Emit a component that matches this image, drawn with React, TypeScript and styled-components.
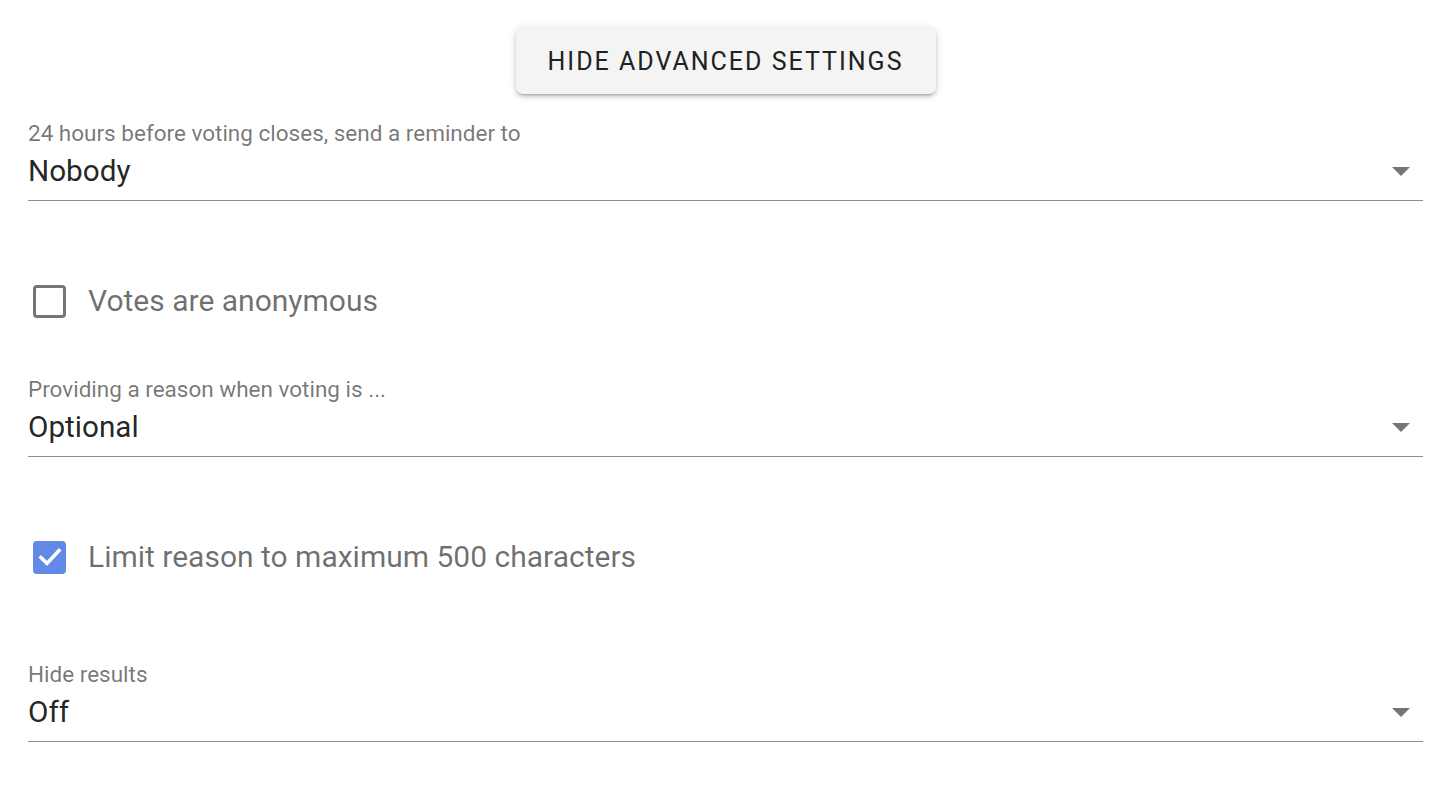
import React from "react";
import styled, { createGlobalStyle } from "styled-components";

const GlobalStyle = createGlobalStyle`
  html, body {
    margin: 0;
    padding: 0;
    background: #ffffff;
    font-family: Roboto, "Noto Sans", "Liberation Sans", sans-serif;
  }
`;

const Page = styled.div`
  display: flex;
  flex-direction: column;
  padding: 27px 20px 0 28px;
`;

const ButtonRow = styled.div`
  display: flex;
  justify-content: center;
`;

const ToggleButton = styled.button`
  height: 67px;
  width: 420px;
  border: none;
  border-radius: 7px;
  background: #f4f4f4;
  color: #212121;
  font-family: Roboto, sans-serif;
  font-size: 25px;
  font-weight: 400;
  letter-spacing: 2px;
  text-transform: uppercase;
  cursor: pointer;
  padding: 2px 0 0;
  box-shadow: 0 3px 2px -2px rgba(0, 0, 0, 0.2), 0 3px 4px 0 rgba(0, 0, 0, 0.14),
    0 1px 9px 0 rgba(0, 0, 0, 0.12);
`;

const Field = styled.div<{ $gap: number }>`
  display: flex;
  flex-direction: column;
  margin-top: ${(p) => p.$gap}px;
`;

const Label = styled.div`
  font-size: 22.5px;
  line-height: 26px;
  color: rgba(0, 0, 0, 0.54);
`;

const SelectBox = styled.div`
  display: flex;
  align-items: center;
  justify-content: space-between;
  margin-top: 7px;
  padding-bottom: 11px;
  border-bottom: 1px solid #8f8f8f;
  cursor: pointer;
`;

const Value = styled.div`
  font-size: 29.7px;
  line-height: 36px;
  color: rgba(0, 0, 0, 0.87);
`;

const Arrow = styled.svg`
  width: 18px;
  height: 9px;
  margin-right: 13px;
  fill: #757575;
`;

const CheckRow = styled.label<{ $gap: number }>`
  display: flex;
  align-items: center;
  height: 50px;
  margin-top: ${(p) => p.$gap}px;
  gap: 22px;
  padding-left: 5px;
  cursor: pointer;
`;

const Box = styled.span<{ $checked: boolean }>`
  box-sizing: border-box;
  width: 33px;
  height: 33px;
  border-radius: 4px;
  display: flex;
  align-items: center;
  justify-content: center;
  border: ${(p) => (p.$checked ? "none" : "3.5px solid #757575")};
  background: ${(p) => (p.$checked ? "#6389e6" : "transparent")};
`;

const CheckText = styled.span`
  font-size: 30px;
  line-height: 36px;
  color: rgba(0, 0, 0, 0.56);
`;

function Select({ label, value, gap }: { label: string; value: string; gap: number }) {
  return (
    <Field $gap={gap}>
      <Label>{label}</Label>
      <SelectBox>
        <Value>{value}</Value>
        <Arrow viewBox="0 0 18 9">
          <path d="M0 0 L18 0 L9 9 Z" />
        </Arrow>
      </SelectBox>
    </Field>
  );
}

function Check({ label, checked, gap }: { label: string; checked: boolean; gap: number }) {
  return (
    <CheckRow $gap={gap}>
      <Box $checked={checked}>
        {checked && (
          <svg width="24" height="20" viewBox="0 0 24 20">
            <path
              d="M3 10.5 L9 16.5 L21 3.5"
              fill="none"
              stroke="#ffffff"
              strokeWidth="3.6"
              strokeLinecap="square"
            />
          </svg>
        )}
      </Box>
      <CheckText>{label}</CheckText>
    </CheckRow>
  );
}

export default function App() {
  return (
    <>
      <GlobalStyle />
      <Page>
        <ButtonRow>
          <ToggleButton>Hide advanced settings</ToggleButton>
        </ButtonRow>
        <Select gap={26} label="24 hours before voting closes, send a reminder to" value="Nobody" />
        <Check gap={75} label="Votes are anonymous" checked={false} />
        <Select gap={50} label="Providing a reason when voting is ..." value="Optional" />
        <Check gap={75} label="Limit reason to maximum 500 characters" checked={true} />
        <Select gap={79} label="Hide results" value="Off" />
      </Page>
    </>
  );
}
